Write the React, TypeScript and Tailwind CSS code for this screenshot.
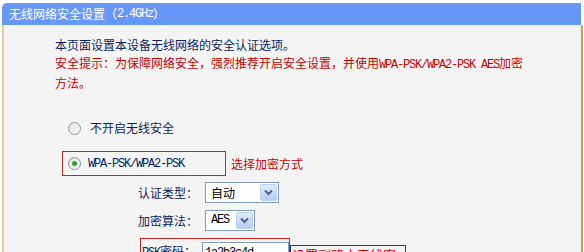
import React from 'react';

const cjk = '"Noto Sans CJK SC", "Liberation Sans", sans-serif';
const mono = '"Liberation Mono", "Noto Sans CJK SC", monospace';

const Chevron = () => (
  <svg width="9" height="7" viewBox="0 0 9 7" fill="none">
    <path d="M1 1.5 L4.5 5 L8 1.5" stroke="#4d6185" strokeWidth="2" />
  </svg>
);

const Select: React.FC<{ value: string; width: string; ascii?: boolean }> = ({ value, width, ascii }) => (
  <div className={`flex h-[21px] ${width} items-stretch border border-[#7f9db9] bg-white`}>
    <span
      className={`flex-1 pl-[5px] leading-[19px] text-black ${ascii ? 'text-[12px] tracking-[-1.2px]' : 'text-[12px]'}`}
      style={{ fontFamily: ascii ? mono : cjk }}
    >
      {value}
    </span>
    <span className="m-[1px] flex w-[17px] items-center justify-center rounded-[2px] border border-[#b9cdf5] bg-gradient-to-b from-[#e3ecfe] to-[#b6cbf6]">
      <Chevron />
    </span>
  </div>
);

const Radio: React.FC<{ checked?: boolean }> = ({ checked }) => (
  <span className="flex h-[13px] w-[13px] items-center justify-center rounded-full border border-[#8a97a6] bg-gradient-to-br from-[#dcdcd6] to-white">
    {checked && <span className="h-[5px] w-[5px] rounded-full bg-[#2aa62a]" />}
  </span>
);

export default function App() {
  return (
    <div className="h-[252px] w-[584px] overflow-hidden bg-white" style={{ fontFamily: cjk }}>
      <div className="ml-[2px] mt-[3px] w-[581px]">
        <div className="flex h-[22px] w-[579px] items-center rounded-tl-[5px] bg-[#6898f7] pl-[7px] text-[12px] text-white">
          <span>无线网络安全设置（</span>
          <span className="text-[12px] tracking-[-1.2px]" style={{ fontFamily: mono }}>2.4GHz</span>
          <span>）</span>
        </div>
        <div className="flex h-[240px] border-l-2 border-r-2 border-l-[#e6cf9c] border-r-[#c8a64e]">
          <div className="flex-1 border-r border-[#e3ebf3] bg-[#f4f4f4] pt-[11px]">
            <div className="ml-[51px] text-[12px] leading-[18px]">
              <div className="text-[#0b1d5c]">本页面设置本设备无线网络的安全认证选项。</div>
              <div className="text-[#cc0000]">
                安全提示：为保障网络安全，强烈推荐开启安全设置，并使用
                <span className="text-[12px] tracking-[-1.2px]" style={{ fontFamily: mono }}>WPA-PSK/WPA2-PSK AES</span>
                加密
                <br />
                方法。
              </div>
            </div>

            <div className="ml-[64px] mt-[26px] flex h-[20px] items-center text-[12px] text-[#0b1d5c]">
              <Radio />
              <span className="ml-[9px]">不开启无线安全</span>
            </div>

            <div className="mt-[13px] flex items-center">
              <div className="ml-[58px] flex h-[25px] w-[164px] items-center border border-[#cc2222] pl-[5px]">
                <Radio checked />
                <span className="ml-[7px] text-[12px] tracking-[-1.2px] text-[#0b1d5c]" style={{ fontFamily: mono }}>
                  WPA-PSK/WPA2-PSK
                </span>
              </div>
              <span className="ml-[5px] text-[12px] text-[#cc0000]">选择加密方式</span>
            </div>

            <div className="ml-[134px] mt-[6px] flex h-[21px] items-center text-[12px] text-[#0b1d5c]">
              <span className="w-[67px]">认证类型：</span>
              <Select value="自动" width="w-[74px]" />
            </div>

            <div className="ml-[134px] mt-[7px] flex h-[21px] items-center text-[12px] text-[#0b1d5c]">
              <span className="w-[67px]">加密算法：</span>
              <Select value="AES" width="w-[50px]" ascii />
            </div>

            <div className="mt-[7px] flex items-start">
              <div className="ml-[136px] flex h-[30px] w-[150px] items-start border border-[#cc2222] pl-[1px] pt-[3px] text-[12px] text-[#0b1d5c]">
                <span className="w-[60px]">
                  <span className="text-[12px] tracking-[-1.2px]" style={{ fontFamily: mono }}>PSK</span>密码：
                </span>
                <div className="h-[22px] flex-1 border border-[#7f9db9] bg-white pl-[2px] text-[12px] leading-[20px] tracking-[-1.2px] text-black" style={{ fontFamily: mono }}>
                  1a2b3c4d
                </div>
              </div>
              <div className="mt-[7px] flex h-[22px] w-[116px] items-start border border-[#2a3a7a] pl-[1px] text-[13px] leading-[18px] text-[#cc0000]">
                设置副路由无线密码
              </div>
            </div>
          </div>
        </div>
      </div>
    </div>
  );
}
